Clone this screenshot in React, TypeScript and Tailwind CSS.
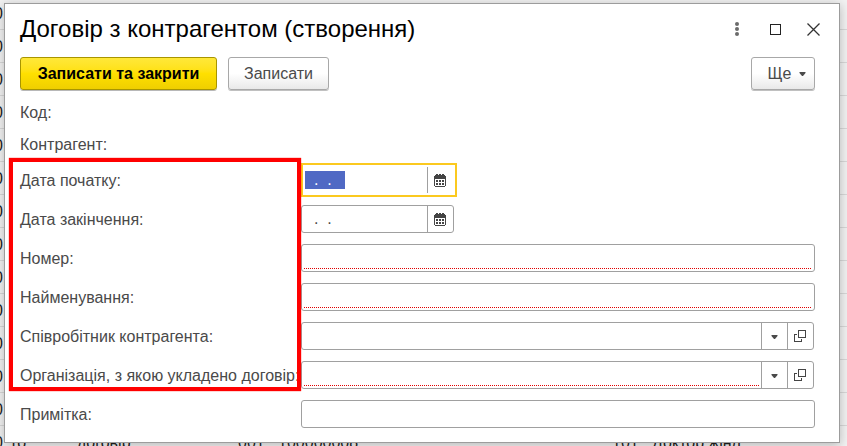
import { useId, type ReactNode } from "react";

const backgroundRows = Array.from({ length: 14 }, (_, i) => i);

function CalendarIcon() {
  return (
    <svg width="12" height="13" viewBox="0 0 12 13" shapeRendering="crispEdges" aria-hidden="true">
      <path fill="#444" d="M2 0h2v1h1V0h2v1h1V0h2v1h1v1h1v10h-1v1H1v-1H0V2h1V1h1z" />
      <path fill="#fff" d="M1 5h10v7H1z" />
      <path
        fill="#444"
        d="M2 6h2v2H2zM5 6h2v2H5zM8 6h2v2H8zM2 9h2v2H2zM5 9h2v2H5zM8 9h2v2H8z"
      />
    </svg>
  );
}

function CaretIcon() {
  return (
    <svg width="7" height="4" viewBox="0 0 7 4" aria-hidden="true">
      <path fill="#4a4a4a" d="M0.500 0h6v1L4 4H3L0.500 1z" />
    </svg>
  );
}

function OpenIcon() {
  return (
    <svg width="12" height="12" viewBox="0 0 12 12" shapeRendering="crispEdges" aria-hidden="true">
      <path fill="none" stroke="#444" d="M4.500 0.500h7v7h-7zM3 4.500H0.500v7h7V9" />
    </svg>
  );
}

function Row({ label, children }: { label: string; children: (id: string) => ReactNode }) {
  const id = useId();
  return (
    <div className="flex h-7 items-center">
      <label htmlFor={id} className="w-[281px] shrink-0 pt-[2px] whitespace-nowrap">
        {label}
      </label>
      {children(id)}
    </div>
  );
}

function Required() {
  return (
    <span className="pointer-events-none absolute right-[2px] bottom-[2px] left-[2px] h-px bg-[repeating-linear-gradient(90deg,#e00000_0_1px,transparent_1px_2px)]" />
  );
}

function TextField({ id, required }: { id: string; required?: boolean }) {
  return (
    <div className="relative flex h-7 flex-1 rounded-[3px] border border-[#a0a0a0] bg-white">
      <input id={id} type="text" className="min-w-0 flex-1 px-1 outline-none" />
      {required && <Required />}
    </div>
  );
}

function PickerField({ id, required }: { id: string; required?: boolean }) {
  return (
    <div className="mr-px flex h-7 flex-1 rounded-[3px] border border-[#a0a0a0] bg-white">
      <div className="relative flex min-w-0 flex-1">
        <input id={id} type="text" className="min-w-0 flex-1 px-1 outline-none" />
        {required && <Required />}
      </div>
      <button type="button" aria-label="Вибрати" className="flex w-[26px] items-center justify-center border-l border-[#a0a0a0] pt-px pr-px">
        <CaretIcon />
      </button>
      <button type="button" aria-label="Відкрити" className="flex w-[26px] items-center justify-center border-l border-[#a0a0a0] pr-[2px]">
        <OpenIcon />
      </button>
    </div>
  );
}

function CalendarButton() {
  return (
    <button type="button" aria-label="Календар" className="flex w-[26px] items-center justify-center border-l border-[#a0a0a0] pr-[2px]">
      <CalendarIcon />
    </button>
  );
}

export default function App() {
  return (
    <div className="relative min-h-screen overflow-hidden bg-[#f2f2f2] font-['Liberation_Sans',Arial,sans-serif] text-base leading-5 text-[#4a4a4a]">
      <div className="absolute inset-0 overflow-hidden text-[#222]" aria-hidden="true">
        <div className="-mt-[3px]">
          {backgroundRows.map((i) => (
            <div key={i} className="flex h-[33px] items-center border-b border-[#d8d8d8] pt-[2px] whitespace-nowrap">
              <span className="-ml-[6px] w-[83px]">{i === 13 ? "0, го" : "0,"}</span>
              {i === 13 && (
                <>
                  <span className="w-[161px]">договір</span>
                  <span className="w-[374px]">001_ 100000008</span>
                  <span>101_ Доктор жінл</span>
                </>
              )}
            </div>
          ))}
        </div>
      </div>

      <main className="relative mt-[3px] mr-[7px] ml-1 border border-[#9c9c9c] bg-white px-[15px] pt-[9px] pb-[14px] shadow-[0_2px_10px_rgba(0,0,0,0.25)]">
        <header className="flex h-8 items-center pr-1">
          <h1 className="flex-1 text-2xl whitespace-nowrap text-black">
            Договір з контрагентом (створення)
          </h1>
          <div className="flex items-center gap-[26px]">
            <button type="button" aria-label="Меню">
              <svg width="14" height="14" viewBox="0 0 14 14" aria-hidden="true">
                <g fill="#6b6b6b">
                  <circle cx="7" cy="2" r="2" />
                  <circle cx="7" cy="7" r="2" />
                  <circle cx="7" cy="12" r="2" />
                </g>
              </svg>
            </button>
            <button type="button" aria-label="Розгорнути">
              <svg width="11" height="11" viewBox="0 0 11 11" shapeRendering="crispEdges" aria-hidden="true">
                <path fill="none" stroke="#222" d="M0.500 0.500h10v10h-10z" />
              </svg>
            </button>
            <button type="button" aria-label="Закрити">
              <svg width="13" height="13" viewBox="0 0 13 13" aria-hidden="true">
                <path fill="none" stroke="#333" strokeWidth="1.300" d="M0.500 0.500l12 12M12.500 0.500l-12 12" />
              </svg>
            </button>
          </div>
        </header>

        <div className="mt-3 flex pr-[9px]">
          <button type="button" className="h-[33px] w-[197px] rounded-[3px] border border-[#a89500] bg-linear-to-b from-[#ffe838] via-[#ffe000] to-[#efcf00] font-bold text-black shadow-[0_1px_0_#b8b8b8]">
            Записати та закрити
          </button>
          <button type="button" className="ml-[11px] h-[33px] w-[101px] rounded-[3px] border border-[#a8a8a8] bg-linear-to-b from-white from-50% to-[#e9e9e9] shadow-[0_1px_0_#c0c0c0]">
            Записати
          </button>
          <button type="button" className="ml-auto flex h-[33px] w-16 items-center justify-center gap-2 rounded-[3px] border border-[#a8a8a8] bg-linear-to-b from-white from-50% to-[#e9e9e9] pl-2 shadow-[0_1px_0_#c0c0c0]">
            Ще
            <CaretIcon />
          </button>
        </div>

        <div className="mt-[13px] flex flex-col gap-3 pr-[9px]">
          <div>Код:</div>
          <div>Контрагент:</div>
        </div>

        <form className="mt-[11px] flex flex-col gap-[11px] pr-[9px]">
          <Row label="Дата початку:">
            {(id) => (
              <div className="-my-1 flex h-[34px] w-[156px] border-2 border-[#fbc91f] bg-white p-[2px]">
                <div className="flex min-w-0 flex-1 items-center">
                  <input
                    id={id}
                    type="text"
                    defaultValue="  .  ."
                    className="h-[18px] w-10 bg-[#5069c4] whitespace-pre text-white outline-none"
                  />
                </div>
                <CalendarButton />
              </div>
            )}
          </Row>
          <Row label="Дата закінчення:">
            {(id) => (
              <div className="flex h-7 w-[153px] rounded-[3px] border border-[#a0a0a0] bg-white">
                <input
                  id={id}
                  type="text"
                  defaultValue="  .  ."
                  className="min-w-0 flex-1 pl-[3px] whitespace-pre outline-none"
                />
                <CalendarButton />
              </div>
            )}
          </Row>
          <Row label="Номер:">{(id) => <TextField id={id} required />}</Row>
          <Row label="Найменування:">{(id) => <TextField id={id} required />}</Row>
          <Row label="Співробітник контрагента:">{(id) => <PickerField id={id} />}</Row>
          <Row label="Організація, з якою укладено договір:">
            {(id) => <PickerField id={id} required />}
          </Row>
          <Row label="Примітка:">{(id) => <TextField id={id} />}</Row>
        </form>

        <div className="pointer-events-none absolute top-[154px] left-1 h-[233px] w-[292px] border-4 border-[#ff0000] shadow-[0_0_1px_#ff0000]" />
      </main>
    </div>
  );
}
